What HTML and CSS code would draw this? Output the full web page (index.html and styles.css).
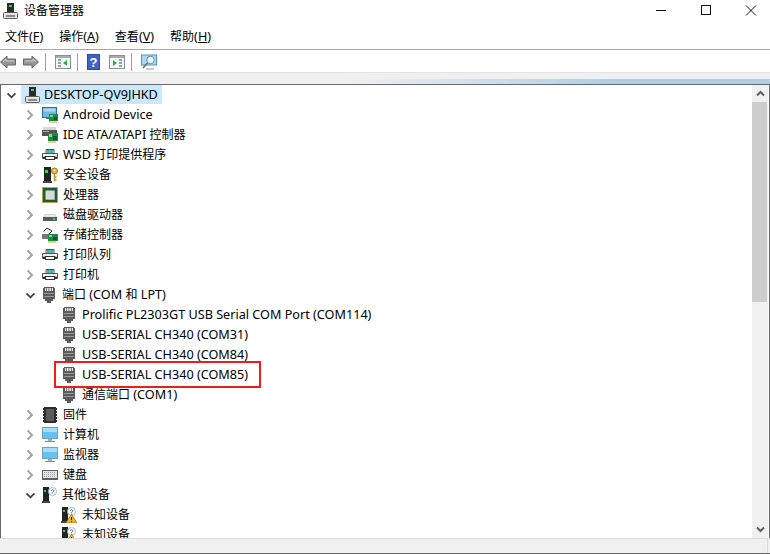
FILE: index.html
```html
<!DOCTYPE html>
<html lang="zh-CN">
<head>
<meta charset="utf-8">
<title>设备管理器</title>
<link rel="stylesheet" href="styles.css">
</head>
<body>
<svg class="defs" width="0" height="0" aria-hidden="true">
  <defs>
    <symbol id="i-host" viewBox="0 0 16 16">
      <rect x="4" y="0" width="7" height="9" fill="#2b2b2b"/>
      <rect x="6" y="2" width="3" height="2" fill="#3fd04a"/>
      <rect x="0.500" y="9.500" width="14" height="6" rx="1" fill="#e4e4e4" stroke="#5a5a5a"/>
      <rect x="3" y="12" width="9" height="2" fill="#8a8a8a"/>
    </symbol>
    <symbol id="i-android" viewBox="0 0 16 16">
      <rect x="0.500" y="0.500" width="14" height="10" fill="#6bb8e8" stroke="#2a6d9c"/>
      <rect x="1.500" y="1.500" width="12" height="3" fill="#a8daf5"/>
      <rect x="4" y="11" width="6" height="1" fill="#5a7f98"/>
      <rect x="7" y="7" width="9" height="7" fill="#1e8a46"/>
      <rect x="8" y="8" width="3" height="2" fill="#8ad39a"/>
      <rect x="12" y="10" width="3" height="3" fill="#0e5a2a"/>
      <path d="M8 14v2M10 14v2M12 14v2M14 14v2" stroke="#c9a227"/>
    </symbol>
    <symbol id="i-ide" viewBox="0 0 16 16">
      <rect x="1" y="0" width="13" height="4" fill="#d8d8d8"/>
      <rect x="0" y="3" width="15" height="6" fill="#555"/>
      <rect x="1" y="4" width="6" height="1" fill="#aaa"/>
      <rect x="6" y="6" width="10" height="8" fill="#1e8a46"/>
      <rect x="7" y="7" width="3" height="3" fill="#8ad39a"/>
      <rect x="11" y="9" width="4" height="4" fill="#0e5a2a"/>
      <path d="M7 14v2M9 14v2M11 14v2M13 14v2" stroke="#c9a227"/>
    </symbol>
    <symbol id="i-printer" viewBox="0 0 16 16">
      <path d="M4 2.500h8v4H4z" fill="#f4f4f4" stroke="#4f4f4f"/>
      <path d="M5 3h2v3H5z" fill="#39a7e8"/><path d="M7 3h2v3H7z" fill="#5ccb54"/><path d="M9 3h2v3H9z" fill="#39a7e8"/>
      <path d="M0.500 6.500h15v5h-15z" fill="#bdbdbd" stroke="#555"/>
      <rect x="1" y="7" width="14" height="2" fill="#efefef"/>
      <rect x="3.500" y="9.500" width="9" height="3" fill="#fff" stroke="#333"/>
      <rect x="1" y="10" width="2" height="2" fill="#333"/><rect x="13" y="10" width="2" height="2" fill="#333"/>
    </symbol>
    <symbol id="i-security" viewBox="0 0 16 16">
      <rect x="2" y="0" width="7" height="14" fill="#222"/>
      <rect x="1" y="14" width="9" height="2" fill="#444"/>
      <rect x="3" y="3" width="3" height="3" fill="#3fd04a"/>
      <circle cx="12.500" cy="4" r="3" fill="#e3b23c" stroke="#a87a1c"/>
      <circle cx="12.500" cy="3.500" r="1" fill="#fff"/>
      <path d="M12.500 7v7M12.500 10h2M12.500 13h2" stroke="#c08f24" stroke-width="1.400"/>
    </symbol>
    <symbol id="i-cpu" viewBox="0 0 16 16">
      <rect x="0" y="0" width="16" height="16" fill="#b9a24a"/>
      <rect x="1" y="1" width="14" height="14" fill="#24583a"/>
      <rect x="3.500" y="3.500" width="9" height="9" fill="#d6dcd6"/>
      <path d="M4 12.500h8.500V4" fill="none" stroke="#a8b0a8"/>
    </symbol>
    <symbol id="i-disk" viewBox="0 0 16 16">
      <path d="M3 7h10l2 3v4H1v-4z" fill="#d0d0d0"/>
      <rect x="1" y="10" width="14" height="4" fill="#5b5b5b"/>
      <rect x="11" y="11" width="2" height="2" fill="#3fd04a"/>
      <rect x="3" y="8" width="10" height="2" fill="#ececec"/>
    </symbol>
    <symbol id="i-storage" viewBox="0 0 16 16">
      <path d="M1.500 4.500L5 1l5 3-3 3 3 3H4" fill="#f0f0f0" stroke="#333"/>
      <rect x="0" y="7" width="6" height="5" fill="#777"/>
      <rect x="6" y="7" width="10" height="7" fill="#1e8a46"/>
      <rect x="7" y="8" width="3" height="2" fill="#8ad39a"/>
      <rect x="11" y="10" width="4" height="3" fill="#0e5a2a"/>
      <path d="M7 14v2M9 14v2M11 14v2M13 14v2" stroke="#c9a227"/>
    </symbol>
    <symbol id="i-port" viewBox="0 0 16 16">
      <path d="M3 0h10v1h1v11h-2v2h-2v2H6v-2H4v-2H2V1h1z" fill="#5a5a5a"/>
      <rect x="4" y="1" width="8" height="3" fill="#e8e8e8"/>
      <path d="M5.500 1v3M8 1v3M10.500 1v3" stroke="#777"/>
      <rect x="3" y="6" width="10" height="1" fill="#9a9a9a"/>
      <rect x="3" y="9" width="10" height="1" fill="#9a9a9a"/>
    </symbol>
    <symbol id="i-chip" viewBox="0 0 16 16">
      <rect x="2" y="0" width="12" height="16" fill="#2e2e2e"/>
      <rect x="4" y="2" width="8" height="12" fill="#5a5a5a"/>
      <path d="M1 2h1M1 5h1M1 8h1M1 11h1M1 14h1M14 2h1M14 5h1M14 8h1M14 11h1M14 14h1" stroke="#222" stroke-width="2"/>
    </symbol>
    <symbol id="i-pc" viewBox="0 0 16 16">
      <rect x="0.500" y="0.500" width="15" height="11" fill="#66c2f2" stroke="#7b9db2"/>
      <rect x="1" y="1" width="14" height="4" fill="#a6def8"/>
      <rect x="6" y="12" width="4" height="2" fill="#9fb0ba"/>
      <rect x="3" y="14" width="10" height="1" fill="#7c8c96"/>
    </symbol>
    <symbol id="i-keyboard" viewBox="0 0 16 16">
      <rect x="0" y="3" width="16" height="10" fill="#5f5f5f"/>
      <rect x="1" y="4" width="14" height="7" fill="#e6e6e6"/>
      <path d="M2 5.500h12M2 7.500h12M2 9.500h12" stroke="#9a9a9a" stroke-dasharray="1 1"/>
    </symbol>
    <symbol id="i-other" viewBox="0 0 16 16">
      <rect x="2" y="0" width="6" height="14" fill="#232323"/>
      <rect x="1" y="14" width="8" height="2" fill="#444"/>
      <rect x="3" y="3" width="2" height="2" fill="#3fd04a"/>
      <circle cx="11.500" cy="4.500" r="4" fill="#fff" stroke="#aab7c4"/>
      <path d="M10 3.500q1.500-1.500 3 0q0 1-1.500 2v1" fill="none" stroke="#3a78c2"/>
    </symbol>
    <symbol id="i-unknown" viewBox="0 0 16 16">
      <rect x="1" y="0" width="6" height="14" fill="#232323"/>
      <rect x="0" y="14" width="7" height="2" fill="#444"/>
      <rect x="2" y="3" width="2" height="2" fill="#3fd04a"/>
      <circle cx="10.500" cy="4.500" r="4" fill="#fff" stroke="#aab7c4"/>
      <path d="M9 3.500q1.500-1.500 3 0q0 1-1.500 2v1" fill="none" stroke="#3a78c2"/>
      <path d="M10.500 7L16 16H5z" fill="#f0b429" stroke="#a66e00" stroke-width="0.700"/>
      <path d="M10.500 10v3M10.500 14v1" stroke="#222"/>
    </symbol>
    <symbol id="i-right" viewBox="0 0 8 12"><path d="M1.500 1.500L6 6l-4.500 4.500" fill="none" stroke="#a6a6a6" stroke-width="2"/></symbol>
    <symbol id="i-down" viewBox="0 0 12 8"><path d="M1.500 1.500L6 6l4.500-4.500" fill="none" stroke="#404040" stroke-width="2"/></symbol>
  </defs>
</svg>

<div class="window">
  <header class="titlebar">
    <svg class="title-icon"><use href="#i-host"/></svg>
    <span class="title-text">设备管理器</span>
    <div class="controls">
      <svg class="ctl" viewBox="0 0 12 12"><path d="M1 5.500h10" stroke="#111" fill="none"/></svg>
      <svg class="ctl" viewBox="0 0 12 12"><rect x="1.500" y="0.500" width="9" height="9" stroke="#111" fill="none"/></svg>
      <svg class="ctl" viewBox="0 0 12 12"><path d="M1 0.500l10 10M11 0.500l-10 10" stroke="#111" fill="none"/></svg>
    </div>
  </header>

  <nav class="menubar">
    <span class="menu">文件<span class="en">(<u>F</u>)</span></span>
    <span class="menu">操作<span class="en">(<u>A</u>)</span></span>
    <span class="menu">查看<span class="en">(<u>V</u>)</span></span>
    <span class="menu">帮助<span class="en">(<u>H</u>)</span></span>
  </nav>

  <div class="toolbar">
    <svg class="tool arrow" viewBox="0 0 16 14"><path d="M0.500 7L7 1v3h8.500v6H7v3z" fill="#979797" stroke="#666"/><path d="M3 7l3-3v2h8" fill="none" stroke="#cfcfcf"/></svg>
    <svg class="tool arrow arrow-next" viewBox="0 0 16 14"><path d="M15.500 7L9 1v3H0.500v6H9v3z" fill="#979797" stroke="#666"/><path d="M2 6h8V4l3 3" fill="none" stroke="#cfcfcf"/></svg>
    <i class="tool-sep"></i>
    <svg class="tool" viewBox="0 0 16 16"><rect x="0.500" y="1.500" width="15" height="13" fill="#f6f6f6" stroke="#8a8f94"/><rect x="1" y="2" width="14" height="2" fill="#a8adb2"/><path d="M3 6h3M3 9h3M3 12h3" stroke="#8ba0b4" stroke-width="2"/><path d="M12 6v6L8 9z" fill="#2fae3a"/></svg>
    <i class="tool-sep"></i>
    <svg class="tool tool-help" viewBox="0 0 13 16"><rect width="13" height="16" fill="#2c4aa0"/><rect x="1" y="1" width="11" height="14" fill="#3f62c4"/><text x="6.500" y="13" class="help-q">?</text></svg>
    <svg class="tool" viewBox="0 0 16 16"><rect x="0.500" y="1.500" width="15" height="13" fill="#f6f6f6" stroke="#8a8f94"/><rect x="1" y="2" width="14" height="2" fill="#a8adb2"/><path d="M10 6h3M10 9h3M10 12h3" stroke="#8ba0b4" stroke-width="2"/><path d="M4 6v6l4-3z" fill="#2fae3a"/></svg>
    <i class="tool-sep"></i>
    <svg class="tool" viewBox="0 0 16 16"><rect x="0.500" y="1" width="15" height="10" fill="#a9dcf5" stroke="#4c93bf"/><circle cx="9.500" cy="6" r="3.800" fill="#e6f6fd" stroke="#6f8c9c"/><path d="M6.500 9L2 14" stroke="#6b6b6b" stroke-width="1.600"/><path d="M5 15h8" stroke="#8a9aa4"/></svg>
  </div>

  <div class="band"></div>

  <main class="pane">
    <div class="tree">
      <div class="row lv0">
        <svg class="chev down"><use href="#i-down"/></svg>
        <span class="selected"><svg class="ico"><use href="#i-host"/></svg><span class="label en">DESKTOP-QV9JHKD</span></span>
      </div>
      <div class="row lv1"><svg class="chev"><use href="#i-right"/></svg><svg class="ico"><use href="#i-android"/></svg><span class="label en">Android Device</span></div>
      <div class="row lv1"><svg class="chev"><use href="#i-right"/></svg><svg class="ico"><use href="#i-ide"/></svg><span class="label"><span class="en">IDE ATA/ATAPI </span>控制器</span></div>
      <div class="row lv1"><svg class="chev"><use href="#i-right"/></svg><svg class="ico"><use href="#i-printer"/></svg><span class="label"><span class="en">WSD </span>打印提供程序</span></div>
      <div class="row lv1"><svg class="chev"><use href="#i-right"/></svg><svg class="ico"><use href="#i-security"/></svg><span class="label">安全设备</span></div>
      <div class="row lv1"><svg class="chev"><use href="#i-right"/></svg><svg class="ico"><use href="#i-cpu"/></svg><span class="label">处理器</span></div>
      <div class="row lv1"><svg class="chev"><use href="#i-right"/></svg><svg class="ico"><use href="#i-disk"/></svg><span class="label">磁盘驱动器</span></div>
      <div class="row lv1"><svg class="chev"><use href="#i-right"/></svg><svg class="ico"><use href="#i-storage"/></svg><span class="label">存储控制器</span></div>
      <div class="row lv1"><svg class="chev"><use href="#i-right"/></svg><svg class="ico"><use href="#i-printer"/></svg><span class="label">打印队列</span></div>
      <div class="row lv1"><svg class="chev"><use href="#i-right"/></svg><svg class="ico"><use href="#i-printer"/></svg><span class="label">打印机</span></div>
      <div class="row lv1"><svg class="chev down"><use href="#i-down"/></svg><svg class="ico"><use href="#i-port"/></svg><span class="label">端口<span class="en"> (COM </span>和<span class="en"> LPT)</span></span></div>
      <div class="row lv2"><svg class="ico"><use href="#i-port"/></svg><span class="label en">Prolific PL2303GT USB Serial COM Port (COM114)</span></div>
      <div class="row lv2"><svg class="ico"><use href="#i-port"/></svg><span class="label en">USB-SERIAL CH340 (COM31)</span></div>
      <div class="row lv2"><svg class="ico"><use href="#i-port"/></svg><span class="label en">USB-SERIAL CH340 (COM84)</span></div>
      <div class="row lv2"><svg class="ico"><use href="#i-port"/></svg><span class="label en">USB-SERIAL CH340 (COM85)</span><span class="callout"></span></div>
      <div class="row lv2"><svg class="ico"><use href="#i-port"/></svg><span class="label">通信端口<span class="en"> (COM1)</span></span></div>
      <div class="row lv1"><svg class="chev"><use href="#i-right"/></svg><svg class="ico"><use href="#i-chip"/></svg><span class="label">固件</span></div>
      <div class="row lv1"><svg class="chev"><use href="#i-right"/></svg><svg class="ico"><use href="#i-pc"/></svg><span class="label">计算机</span></div>
      <div class="row lv1"><svg class="chev"><use href="#i-right"/></svg><svg class="ico"><use href="#i-pc"/></svg><span class="label">监视器</span></div>
      <div class="row lv1"><svg class="chev"><use href="#i-right"/></svg><svg class="ico"><use href="#i-keyboard"/></svg><span class="label">键盘</span></div>
      <div class="row lv1"><svg class="chev down"><use href="#i-down"/></svg><svg class="ico"><use href="#i-other"/></svg><span class="label">其他设备</span></div>
      <div class="row lv2"><svg class="ico"><use href="#i-unknown"/></svg><span class="label">未知设备</span></div>
      <div class="row lv2"><svg class="ico"><use href="#i-unknown"/></svg><span class="label">未知设备</span></div>
    </div>
    <div class="scrollbar">
      <div class="sb-btn"><svg class="sb-arrow" viewBox="0 0 9 7"><path d="M1 5.500L4.500 2L8 5.500" fill="none" stroke="#606060" stroke-width="2"/></svg></div>
      <div class="sb-thumb"></div>
      <div class="sb-track"></div>
      <div class="sb-btn"><svg class="sb-arrow" viewBox="0 0 9 7"><path d="M1 1.500L4.500 5L8 1.500" fill="none" stroke="#606060" stroke-width="2"/></svg></div>
    </div>
  </main>

  <footer class="statusbar"><i class="status-sep"></i></footer>
</div>
</body>
</html>
```
FILE: styles.css
```css
* { box-sizing: border-box; }
html, body { margin: 0; height: 100%; background: #fff; }
body { overflow: hidden; font: 12px/16px "Noto Sans", "Noto Sans CJK SC", sans-serif; color: #000; }
.defs { display: block; height: 0; }
.window { display: flex; flex-direction: column; width: 770px; height: 554px; }
.en { font-size: 12.65px; }
.label.en, .label:has(.en) { margin-bottom: 2px; }

.titlebar { display: flex; align-items: center; flex: 0 0 22px; padding-left: 3px; }
.title-icon { width: 16px; height: 16px; margin-right: 5px; }
.title-text { line-height: 20px; }
.controls { display: flex; gap: 33px; margin-left: auto; margin-right: 13px; }
.ctl { width: 12px; height: 12px; }

.menubar { display: flex; gap: 16px; flex: 0 0 28px; align-items: center; padding: 2px 0 0 5px; border-bottom: 1px solid #a6a6a6; }
.menu u { text-underline-offset: 1px; }

.toolbar { display: flex; align-items: center; flex: 0 0 23px; border-bottom: 1px solid #e3e3e3; padding-top: 1px; }
.tool { width: 16px; height: 16px; flex: none; }
.arrow { height: 14px; }
.arrow-next { margin-left: 7px; }
.tool-sep { flex: none; width: 1px; height: 18px; background: #a0a0a0; margin: 0 9px 0 6px; }
.tool-help { width: 13px; margin-right: 9px; }
.help-q { font: bold 13px "Liberation Sans", sans-serif; fill: #fff; text-anchor: middle; }

.band { flex: 0 0 11px; background: #f0f0f0; position: relative; }
.band::after { content: ""; position: absolute; left: 0; right: 0; bottom: 0; height: 5px; background: linear-gradient(90deg, #f0f0f0 0, #f0f0f0 45%, #b0cde6 80%); }

.pane { display: flex; flex: 1 1 auto; min-height: 0; border-top: 1px solid #696969; border-left: 1px solid #696969; border-right: 1px solid #696969; }
.tree { flex: 1 1 auto; min-width: 0; overflow: hidden; }
.row { display: flex; align-items: center; height: 20px; position: relative; white-space: nowrap; }
.lv0 { padding-left: 5px; }
.lv1 { padding-left: 25px; }
.lv2 { padding-left: 60px; }
.chev { width: 8px; height: 12px; flex: none; margin-right: 8px; }
.chev.down { width: 11px; height: 7px; margin: 0 5px 0 -1px; }
.lv0 .chev.down { margin: 0 4px 0 0; }
.ico { width: 16px; height: 16px; flex: none; margin-right: 5px; }
.selected { display: flex; align-items: center; height: 19px; background: #cce8ff; padding: 0 4px; margin-top: -1px; }
.selected .ico { margin-right: 3px; }
.callout { position: absolute; left: 53px; top: -4px; width: 207px; height: 27px; border: 2px solid #ee1c1c; }

.scrollbar { display: flex; flex-direction: column; flex: 0 0 16px; margin-right: 1px; background: #f0f0f0; }
.sb-btn { display: flex; align-items: center; justify-content: center; flex: 0 0 17px; }
.sb-arrow { width: 9px; height: 7px; }
.sb-thumb { flex: 0 0 200px; background: #cdcdcd; margin-right: 1px; }
.sb-track { flex: 1 1 auto; }

.statusbar { display: flex; justify-content: flex-end; flex: 0 0 16px; background: #f0f0f0; border-top: 1px solid #dcdcdc; border-bottom: 1px solid #696969; padding-right: 2px; }
.status-sep { width: 1px; background: #dcdcdc; }
```
